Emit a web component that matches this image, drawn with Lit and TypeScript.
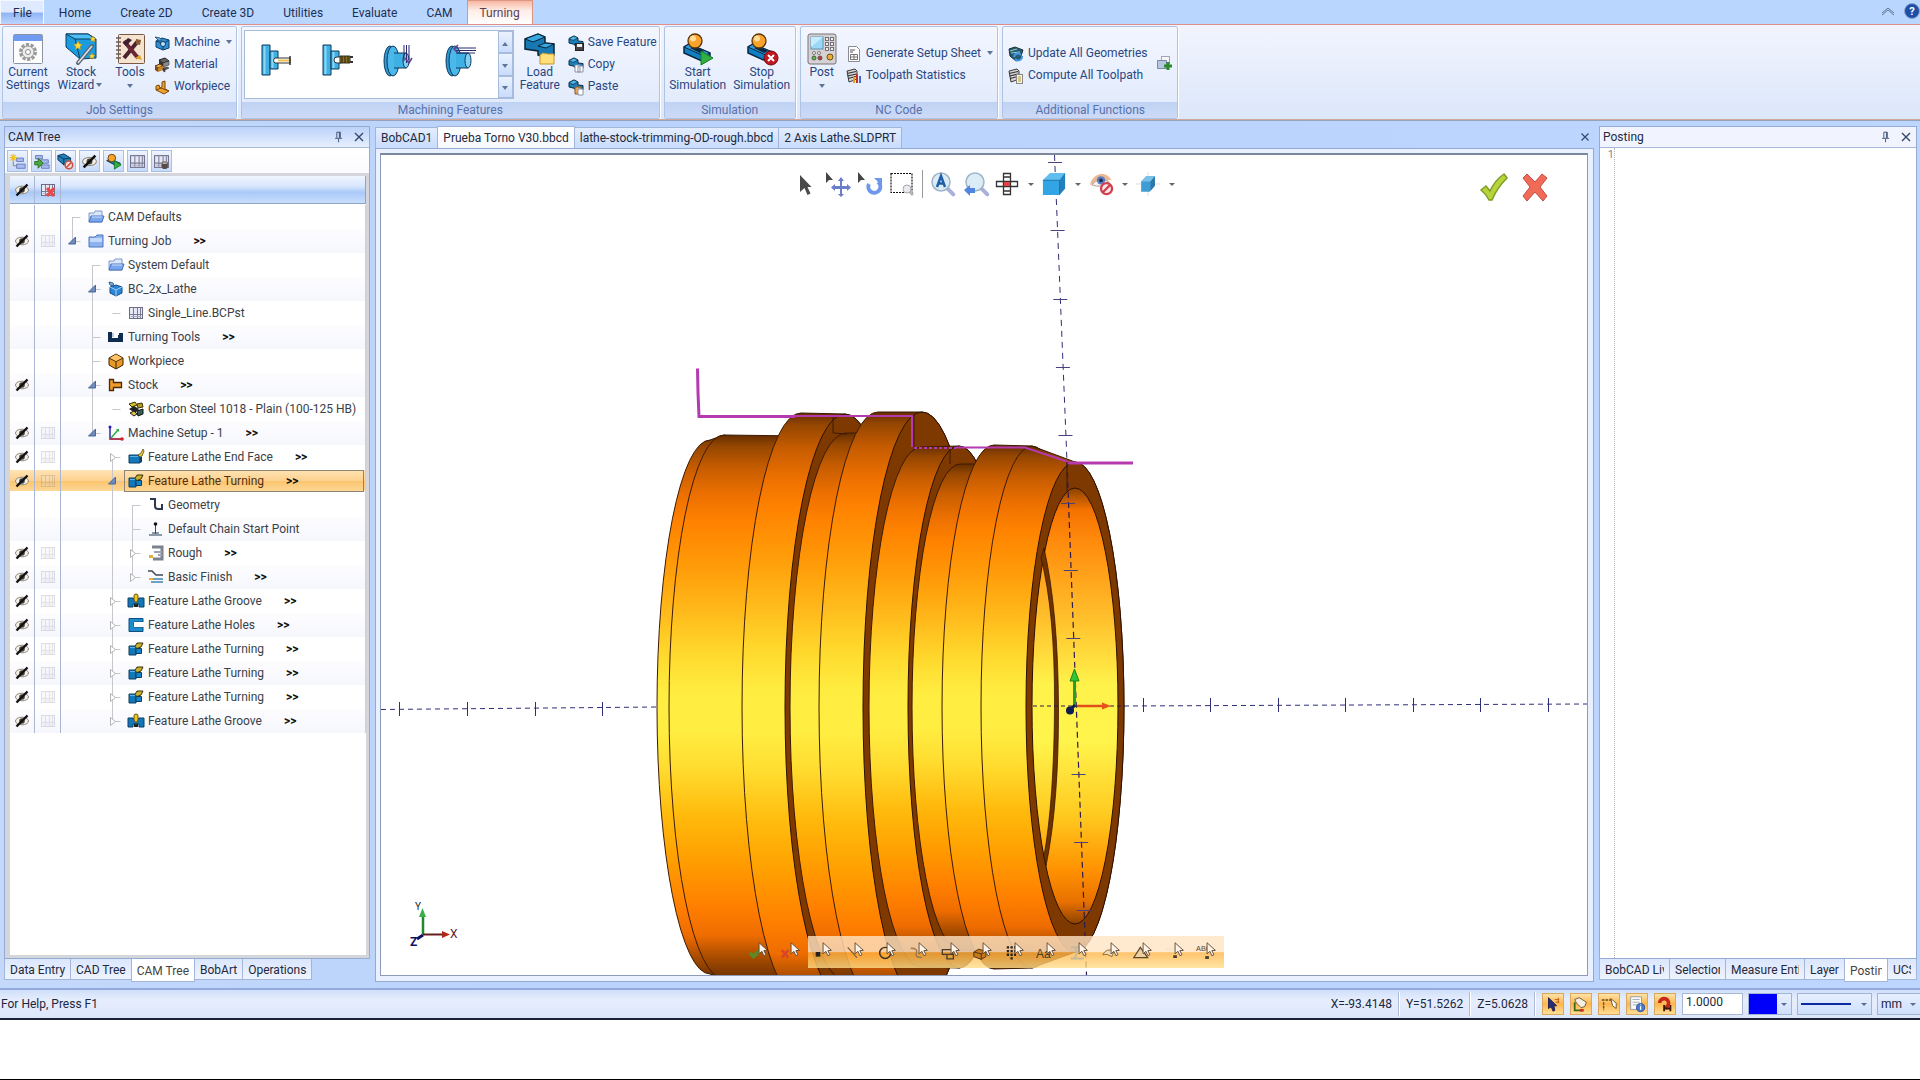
import { LitElement, html, svg, css, nothing, TemplateResult, SVGTemplateResult } from "lit";
import { customElement, property, state } from "lit/decorators.js";
import { classMap } from "lit/directives/class-map.js";

/* ---------- icons ---------- */

const cursorShape = (x: number, y: number, fill: string, stroke: string) => svg`
  <path transform="translate(${x} ${y})" d="M0 0 L0 12 L3 9.300 L5.200 14 L7.400 13 L5.200 8.500 L9 8.200 Z" fill=${fill} stroke=${stroke} stroke-width="1"/>`;

const magnifier = (cx: number, cy: number, r: number) => svg`
  <path d="M${cx + r * 0.7} ${cy + r * 0.7} l6 6" stroke="#a9b0dd" stroke-width="4" stroke-linecap="round"/>
  <circle cx=${cx} cy=${cy} r=${r} fill="#dcecf6" stroke="#9fb4c6" stroke-width="1.500"/>`;

const sheet = svg`
  <rect x="1.500" y="2.500" width="13" height="11" fill="#e6e8f6" stroke="#6c6c84"/>
  <path d="M5.500 3v10M9.500 3v10M12.500 3v10M2 9.500h12" stroke="#7b7b94" fill="none"/>
  <path d="M3 11.500h10" stroke="#a5a8c4"/>`;

const bluePart = svg`
  <path d="M1 3.500 L6 1 L10 3 L10 6 L15 6.500 L15 11 L11 13 L7 11 L7 9.500 L1 8 Z" fill="#1c7fb8" stroke="#0c2c48"/>
  <path d="M1 3.500 L6 1 L10 3 L5 5.500 Z" fill="#54b4e4" stroke="#0c2c48" stroke-width=".7"/>`;

const latheBody = svg`
  <path d="M1 5h7v9H1z" fill="#1478b8" stroke="#0b3f66"/>
  <path d="M8 7.500h5.500v5H8z" fill="#1684c8" stroke="#0b3f66"/>
  <path d="M2 6.500h5" stroke="#5cb4e4"/>`;

const player = svg`
  <path d="M2 14 L7 11 L28 20 L28 25 L22 29 L2 20 Z" fill="#0f7fc4" stroke="#0a2740" stroke-width="1.500"/>
  <path d="M2 14 L7 11 L28 20 L22 23 Z" fill="#2b9ee0" stroke="#0a2740"/>
  <path d="M8 15 L12 13.500 L22 18 L18 20 Z" fill="#0a2740"/>
  <circle cx="13" cy="8" r="7" fill="#f8a32a" stroke="#5c3406" stroke-width="1.300"/>
  <circle cx="11" cy="5.500" r="3" fill="#ffdc9a"/>`;

const chuck = svg`
  <path d="M2 1h8v30H2z" fill="#3fb0e4" stroke="#12395c"/>
  <path d="M10 7h8v18h-8z" fill="#3fb0e4" stroke="#12395c"/>
  <path d="M4.500 2v28M12.500 8v16" stroke="#8ad8f8" stroke-width="2"/>`;

const disc = svg`
  <ellipse cx="7" cy="17" rx="6" ry="15" fill="#2a9bd6" stroke="#12395c"/>
  <ellipse cx="10" cy="17" rx="6" ry="15" fill="#4bb8ea" stroke="#12395c"/>
  <path d="M11 9h12v15H11z" fill="#3fb0e4"/>
  <path d="M11 9h12M11 24h12" stroke="#12395c"/>
  <ellipse cx="23" cy="16.500" rx="3" ry="7.500" fill="#7fd0f4" stroke="#12395c"/>`;

const notes = svg`
  <path d="M1 3l8-2 2 2v8l-8 3z" fill="#d4d4d4" stroke="#3a3a3a"/>
  <path d="M1 5.500l9-2M1.500 8l9-2M2 10.500l8-2" stroke="#333" stroke-width="1.200"/>`;

const pick = cursorShape(12, 3, "#fff4e6", "#5a4a3a");

const ICONS: Record<string, [number, SVGTemplateResult]> = {
  settings: [32, svg`
    <rect x="1.500" y="1.500" width="29" height="29" rx="1" fill="#fdfdfd" stroke="#8b93a4"/>
    <rect x="2" y="2" width="28" height="6" fill="#6f9cf0"/>
    <circle cx="16" cy="19" r="7" fill="none" stroke="#9a9a9a" stroke-width="4" stroke-dasharray="3 1.400"/>
    <circle cx="16" cy="19" r="6" fill="#ececec" stroke="#9a9a9a"/><circle cx="16" cy="19" r="2.500" fill="#fff" stroke="#8a8a8a"/>`],
  wizard: [32, svg`
    <path d="M1 1h22l8 5v19l-16 1L1 14z" fill="#1a9ce0" stroke="#0d3c60"/>
    <path d="M1 1h22l8 5H10z" fill="#4cc0f4" stroke="#0d3c60"/><path d="M10 6L15 26" stroke="#0d3c60"/>
    <path d="M27 13L13 30" stroke="#5c6470" stroke-width="4" stroke-linecap="round"/><path d="M27 13L13 30" stroke="#dfe4ea" stroke-width="1.500"/>
    <path d="M13 8l1.500 3 3 .5-2.500 2 .6 3-2.600-1.600-2.600 1.600.6-3-2.500-2 3-.5zM28 3l1 2 2 .3-1.500 1.500.4 2-1.900-1-2 1 .4-2L25 5.300l2-.3zM27 20l1 2 2 .3-1.500 1.500.4 2-1.900-1-2 1 .4-2-1.400-1.500 2-.3z" fill="#ffd83a" stroke="#b8860b" stroke-width=".5"/>`],
  tools: [32, svg`
    <rect x="4.500" y="1.500" width="26" height="29" rx="1" fill="#f4e3cf" stroke="#7b5a44"/>
    <path d="M2 5h5M2 9h5M2 13h5M2 17h5M2 21h5M2 25h5" stroke="#6a5a58" stroke-width="1.500"/>
    <path d="M10 25L24 8" stroke="#4c2230" stroke-width="4"/><path d="M10 8l14 17" stroke="#6b2638" stroke-width="4"/>
    <path d="M9 10l5-5 4 2-6 6z" fill="#3a2030"/><path d="M21 25l5-3 2 5z" fill="#e0a62a"/><path d="M22 6l5 1-1 5-4-1z" fill="#8a5a30"/>`],
  machine: [16, svg`
    <path d="M2 6l6-3 7 2v8l-6 2-7-3z" fill="#2f8fd4" stroke="#0d3c66"/><path d="M2 6l7 2.500L15 5M9 8.500V15" stroke="#0d3c66" fill="none"/>
    <path d="M1 2l5 1 2 3-4-1z" fill="#7fb6e0" stroke="#2b5c86"/><circle cx="9" cy="9" r="2.500" fill="#bfe0f6" stroke="#0d3c66"/>`],
  material: [16, svg`
    <path d="M5 3l6-2 4 3-6 2z" fill="#666" stroke="#222"/><path d="M5 3v4l4 2V6z" fill="#333"/><path d="M9 6l6-2v4L9 10z" fill="#8a8a8a" stroke="#222" stroke-width=".5"/>
    <path d="M1 9l5-2 3 2-5 2z" fill="#f0b050" stroke="#50300a"/><path d="M1 9v4l3 2v-4z" fill="#7c4a10"/><path d="M4 11l5-2v4l-5 2z" fill="#c8862a"/>
    <path d="M9 11l4-1 2 1-4 2zM9 11v3l2 1v-2z" fill="#555" stroke="#222" stroke-width=".5"/>`],
  workpiece: [16, svg`
    <path d="M2 7l3-1 1 3 2-1V3l3-1v8l4 2-5 3-8-4z" fill="#f0a030" stroke="#7a4a0a"/><path d="M2 11l5-2 8 3" stroke="#7a4a0a" fill="none"/>`],
  feat1: [32, svg`${chuck}<path d="M30 14H15a3 3 0 0 0 0 5h15z" fill="#fff" stroke="#333"/><path d="M18 15.500h11v2H18z" fill="#f0c050"/><path d="M30 12v9" stroke="#333" stroke-width="1.500"/>`],
  feat2: [32, svg`${chuck}<path d="M20 13h-4a3 3 0 0 0 0 6h4z" fill="#fff" stroke="#333"/><path d="M19 12h10v7H19z" fill="#8a7020" stroke="#333"/><path d="M21 12v7M24 12v7M27 12v7" stroke="#2a2208"/><path d="M29 13h3M29 18h3" stroke="#333" stroke-width="2"/>`],
  feat3: [32, svg`${disc}<path d="M21 1v16M23.500 1v18M26 1v15" stroke="#28286c"/><path d="M22 14l4 5 3-5" fill="none" stroke="#6a3a8c" stroke-width="1.500"/>`],
  feat4: [32, svg`${disc}<path d="M10 4h21M10 6.500h21M12 9h18" stroke="#28286c"/><path d="M13 1l-4 4 4 4" fill="none" stroke="#6a3a8c" stroke-width="1.500"/>`],
  load: [32, svg`
    <path d="M1 6l13-5 7 3v6l9 1v11l-8 3-8-3v-4L1 16z" fill="#1779b4" stroke="#0a2338" stroke-width="1.500"/>
    <path d="M1 6l13-5 7 3-12 5z" fill="#3aa8e0" stroke="#0a2338"/><path d="M14 13l7-3 9 1-8 4z" fill="#3aa8e0" stroke="#0a2338"/>
    <path d="M16 22l3-2 5 1h6v10H16z" fill="#ffe07a" stroke="#c8962a"/>`],
  save: [16, svg`${bluePart}<rect x="7.500" y="8.500" width="8" height="7" fill="#444" stroke="#222"/><path d="M9 9h5v3H9z" fill="#eee"/>`],
  copy: [16, svg`${bluePart}<path d="M7 8h5v7H7zM10 9h5v6h-5z" fill="#fff" stroke="#8a92a8"/>`],
  paste: [16, svg`${bluePart}<path d="M7 8h6v7H7z" fill="#e8a860" stroke="#8a5a2a"/><path d="M10 10h5v6h-5z" fill="#fff" stroke="#8a92a8"/>`],
  start: [32, svg`${player}<path d="M19 18l12 7-12 7z" fill="#30b040" stroke="#177a24"/>`],
  stop: [32, svg`${player}<circle cx="25" cy="25" r="7" fill="#c01820" stroke="#7a0a10"/><path d="M22 22l6 6M28 22l-6 6" stroke="#fff" stroke-width="2"/>`],
  post: [32, svg`
    <rect x="2" y="1" width="28" height="30" rx="2" fill="#d6d2d4" stroke="#77727a"/><rect x="5" y="4" width="12" height="12" fill="#9bd8f8" stroke="#5a90b0"/>
    <path d="M5 4h12L5 14z" fill="#c6ecff"/>
    <g fill="#eee" stroke="#77727a"><rect x="19.500" y="4.500" width="3" height="3"/><rect x="24.500" y="4.500" width="3" height="3"/><rect x="19.500" y="9.500" width="3" height="3"/><rect x="24.500" y="9.500" width="3" height="3"/><rect x="19.500" y="14.500" width="3" height="3"/><rect x="24.500" y="14.500" width="3" height="3"/></g>
    <circle cx="8" cy="20" r="1.500" fill="#fff" stroke="#777"/><circle cx="13" cy="20" r="1.500" fill="#fff" stroke="#777"/>
    <circle cx="8" cy="25" r="2" fill="#5ac040" stroke="#555"/><circle cx="14" cy="25" r="2" fill="#d03030" stroke="#555"/><circle cx="24" cy="24" r="3" fill="#e8b030" stroke="#6a5020"/>`],
  setupSheet: [16, svg`<path d="M2.500.5h8l3 3v12h-11z" fill="#fff" stroke="#8a8a92"/><path d="M4 4h5M4 6h3" stroke="#555"/><path d="M4.500 8.500h7v5h-7zM8 8.500v5M4.500 11h7" stroke="#777" fill="none"/>`],
  stats: [16, svg`${notes}<path d="M7 9h2v6H7z" fill="#e0a020"/><path d="M10 6h2v9h-2z" fill="#c83030"/><path d="M13 8h2v7h-2z" fill="#4868d0"/>`],
  update: [16, svg`<path d="M1 3l6-2 8 3-3 9-4 2-6-5z" fill="#2a5a70" stroke="#18303c"/><path d="M2 5l7-2M3 7l9-1" stroke="#9cc"/><path d="M6 11a4 4 0 0 1 7-2M14 10a4 4 0 0 1-7 3" stroke="#3a9ae8" stroke-width="2" fill="none"/>`],
  compute: [16, svg`${notes}<rect x="8.500" y="6.500" width="6" height="9" fill="#f4f4e8" stroke="#888"/><path d="M10 9h3M10 11h3M10 13h3" stroke="#b89a30"/>`],
  addWin: [16, svg`<rect x="4.500" y="1.500" width="8" height="7" fill="#f6f6fa" stroke="#a0a4b4"/><path d="M.5 5.500h9v8H.5z" fill="#b8c6e0" stroke="#7a8aaa"/><path d="M11 7v8M7 11h8" stroke="#2c8a2c" stroke-width="3"/>`],
  eye: [16, svg`<ellipse cx="8" cy="8" rx="6.500" ry="3.800" fill="#f6f1e6" stroke="#8f8778"/><circle cx="8" cy="8" r="2.800" fill="#444"/><path d="M2.500 13.500L13.500 2.500" stroke="#111" stroke-width="2.400"/>`],
  sheet: [16, sheet],
  sheetX: [16, svg`${sheet}<path d="M7 6l7 8M14 6l-7 8" stroke="#e84848" stroke-width="3"/>`],
  sheetDb: [16, svg`${sheet}<rect x="8" y="8" width="6" height="7" rx="2" fill="#5a4a48"/><path d="M9 9.500h4" stroke="#eee"/>`],
  folder: [16, svg`<path d="M1 4h5l1-2h7v11H1z" fill="#dbe8fb" stroke="#7d98c8"/><path d="M1 13L3 7h13l-2 6z" fill="#7aa6ee" stroke="#4d76bc"/><path d="M4 8h10" stroke="#cfe2ff"/>`],
  folderShut: [16, svg`<path d="M1 4h6l2-2h6v12H1z" fill="#8db2f0" stroke="#4d76bc"/><path d="M2 5h12v4H2z" fill="#c3d9fb"/>`],
  bccube: [16, svg`<path d="M2 6l6-2 6 2v6l-6 3-6-3z" fill="#2c86d8" stroke="#134c86"/><path d="M2 6l6 3 6-3M8 9v6" stroke="#9fd0f8" fill="none"/><path d="M1 1l4 1 1 3-4-1z" fill="#8ab8e8" stroke="#2c5c94"/>`],
  turningTools: [16, svg`<path d="M0 3h4v6h6V6h1V4h4v9H0z" fill="#0e2c50"/><path d="M5 4v4" stroke="#7aa0c8"/>`],
  box: [16, svg`<path d="M1 5l7-4 7 4v7l-7 4-7-4z" fill="#e89a28" stroke="#3e2404"/><path d="M1 5l7 3.500L15 5M8 8.500V16" stroke="#3e2404" fill="none"/><path d="M2 5l6-3.500L14 5 8 8z" fill="#ffc468"/>`],
  stock: [16, svg`<path d="M1.500 2.500h4v3h8v5h-8v3h-4z" fill="#ee9a2c" stroke="#4a2a04" stroke-width="1.300"/>`],
  steel: [16, svg`<path d="M1 3l6-2 2 3-5 2z" fill="#d8c020" stroke="#3a3404"/><path d="M9 3l5-1 1 4-5 1z" fill="#b89a18" stroke="#3a3404"/><path d="M1 8l5-3 5 3-4 4z" fill="#222"/><path d="M2 12l4-2 3 3-3 2z" fill="#e0c040" stroke="#222"/><path d="M9 10l6-2v5l-5 2z" fill="#35605a" stroke="#111"/>`],
  axes: [16, svg`<path d="M2 1v13h12" stroke="#2a2aa8" stroke-width="1.500" fill="none"/><path d="M2 14h13" stroke="#c83030" stroke-width="1.500"/><path d="M3 13l7-8" stroke="#2fae3c" stroke-width="1.500"/><path d="M8 4h3v3z" fill="#2fae3c"/><circle cx="14" cy="14" r="1.800" fill="#d02020"/><circle cx="2" cy="2" r="1.500" fill="#2020b0"/>`],
  endFace: [16, svg`<path d="M1 6h11v8H1z" fill="#1478b8" stroke="#0b3f66"/><path d="M12 7l2 1v5l-2 1z" fill="#0f3f64"/><path d="M10 6l3-2 2-4 1 2-2 5-2 1z" fill="#e8c838" stroke="#4a3a08" stroke-width=".7"/><path d="M2 7.500h8" stroke="#5cb4e4"/>`],
  turning: [16, svg`${latheBody}<path d="M7 5.500l2-3.500h6l-2 4-4 1.500z" fill="#c8b030" stroke="#3a3008"/>`],
  groove: [16, svg`<path d="M0 5h5l2 3h2l2-3h5v9h-5v-3H5v3H0z" fill="#1478b8" stroke="#0b3f66"/><path d="M6 3a2 2 0 0 1 4 0v4l-2 3-2-3z" fill="#f0c820" stroke="#6a5008"/><path d="M6 14v-3h4v3" fill="#222"/>`],
  holes: [16, svg`<path d="M1 1.500h14V5H6v5h9v4.500H1z" fill="#1f8ccc" stroke="#0d4f80"/><path d="M6 5h9v5H6z" fill="#fff"/>`],
  geometry: [16, svg`<path d="M2 2h5v7q0 3 3 3h4V7" stroke="#2c3850" stroke-width="2" fill="none"/>`],
  chain: [16, svg`<path d="M1 14h13M4 12h7" stroke="#6a7a8c" stroke-width="1.500"/><path d="M7.500 13V4" stroke="#3a4a5c"/><circle cx="7.500" cy="3" r="1.800" fill="#111"/>`],
  rough: [16, svg`<path d="M4 2h10v12H5" stroke="#7a8490" stroke-width="3" fill="none"/><path d="M6 7h8M10 10h4" stroke="#9aa4b0" stroke-width="2"/><path d="M1 10h4v3H1z" fill="#e0b040"/>`],
  finish: [16, svg`<path d="M0 2h4l4 4h7" stroke="#3f4a58" stroke-width="1.500" fill="none"/><path d="M3 10h12M3 13h12" stroke="#6ea0c4" stroke-width="2"/><path d="M1 9h4v2H1z" fill="#e0b040"/>`],
  tb1: [20, svg`<path d="M9 6h8v4H9zM9 13h10v5H9z" fill="#a9bcf0" stroke="#6074b8"/><path d="M5 7v8h4" stroke="#777" fill="none"/><path d="M5 1v9M1 5.500h9M2 2l6 7M8 2l-6 7" stroke="#f2c21c" stroke-width="1.300"/>`],
  tb2: [20, svg`<path d="M3 3h8v4H3zM9 8h9v4H9zM10 14h9v4h-9z" fill="#a9bcf0" stroke="#6074b8"/><path d="M2 10h4V6l6 6-6 6v-4H2z" fill="#48a83c" stroke="#2a6a20"/>`],
  tb3: [20, svg`<path d="M1 3l7-2 8 5v5l-8 3-7-6z" fill="#1f80bc" stroke="#0c2c48"/><path d="M1 3l7 4 8-1M8 7v7" stroke="#0c2c48" fill="none"/><circle cx="14" cy="14" r="4.500" fill="#f4dcd8" stroke="#c85040" stroke-width="1.800"/><path d="M11 17l6-6" stroke="#c85040" stroke-width="1.800"/>`],
  tb5: [20, svg`<path d="M2 9l4-2 12 5-3 4z" fill="#0f7fc4" stroke="#0a2740"/><circle cx="8" cy="6" r="4.500" fill="#f8a32a" stroke="#5c3406"/><path d="M11 9l8 5-8 5z" fill="#30b040" stroke="#177a24"/>`],
  pin: [16, svg`<path d="M5.500 9V2.500h4V9M8.500 2.500V9M3.500 9.500h8M7.500 10v4" stroke="#33486c" fill="none"/>`],
  close: [16, svg`<path d="M4 4l8 8M12 4l-8 8" stroke="#33486c" stroke-width="1.400"/>`],
  chevron: [16, svg`<path d="M2 10l6-5 6 5M2 12l6-5 6 5" stroke="#5d7391" fill="none"/>`],
  help: [16, svg`<circle cx="8" cy="8" r="7.500" fill="#1d4fa8" stroke="#8fa4c8"/><text x="8" y="12" text-anchor="middle" font-family="Roboto, sans-serif" font-weight="700" font-size="11" fill="#fff">?</text>`],
  /* view toolbar */
  vArrow: [24, svg`<path d="M6 3v17l4.500-4 3 7 3-1.500-3-6.500h4z" fill="#4a4a4a"/>`],
  vPan: [24, svg`<path d="M0 0v11l3-3h4z" fill="#444"/><path d="M15 5l3 4h-2v5h5v-2l4 3.500-4 3.500v-2h-5v5h2l-3 3-3-3h2v-5H9v2l-4-3.500L9 12v2h5V9h-2z" fill="#6b7cc8"/>`],
  vRotate: [24, svg`<path d="M0 0v11l3-3h4z" fill="#444"/><path d="M11 12a6 6 0 1 0 9-2" stroke="#6f98ec" stroke-width="4" fill="none"/><path d="M16 6h8v8z" fill="#6f98ec"/>`],
  vWindow: [24, svg`<path d="M1 1.500h21v19H1z" stroke="#111" stroke-width="1.200" stroke-dasharray="2 1" fill="none"/><path d="M19 19l4 4" stroke="#b4b4bc" stroke-width="3"/><circle cx="17" cy="17" r="4" fill="#e8eaec" stroke="#a8a8b0"/>`],
  vZoomAll: [24, svg`${magnifier(10, 10, 9)}<path d="M6 15l4-11 4 11M7.500 11.500h5" stroke="#1e5fa8" stroke-width="2.500" fill="none"/>`],
  vZoomPrev: [24, svg`${magnifier(12, 10, 9)}<path d="M1 18l6-5v3h5v5H7v3z" fill="#4f86e0"/>`],
  vOrient: [24, svg`<path d="M8.500 1.500h7v21h-7zM1.500 9.500h21v5h-21zM8.500 5h7M8.500 19h7" fill="#fff" stroke="#333" stroke-width="1.300"/><path d="M9 10h6v4H9z" fill="#e84040"/>`],
  vCube: [26, svg`<path d="M1 9l8-8h16v17l-7 7H1z" fill="#33a4e4"/><path d="M1 9l8-8h16l-6 8z" fill="#5fbdf0"/><path d="M19 9l6-8v17l-6 7z" fill="#2380bc"/><path d="M1 9h18v16" fill="none" stroke="#2272a6"/>`],
  vHide: [26, svg`<path d="M1 14Q3 4 13 2q8 0 12 8-3-3-5 0Q14 6 8 11q-3 2-7 3z" fill="#edb791"/><path d="M3 14Q11 4 22 11 14 18 3 14z" fill="#eef2f6" stroke="#b89a84"/><circle cx="13" cy="9" r="4.500" fill="#5a7cc0"/><circle cx="13" cy="9" r="2" fill="#1c2c50"/><circle cx="19" cy="18" r="6" fill="#fbe9e9" stroke="#d04050" stroke-width="2.500"/><path d="M15 22l8-8" stroke="#d04050" stroke-width="2.500"/>`],
  vSmallCube: [28, svg`<path d="M0 14h28M14 0v28" stroke="#d4d8dc"/><path d="M6 11l6-6h10v11l-6 7H6z" fill="#3f9cd4"/><path d="M6 11l6-6h10l-5 6z" fill="#7ac0e8"/><path d="M17 11l5-6v11l-5 6z" fill="#2c78a8"/>`],
  ok: [28, svg`<path d="M1 17l5-4 4 5Q15 7 24 1l3 4Q17 15 12 27H9Q6 21 1 17z" fill="#b8d43c" stroke="#7f9c26" stroke-width="1.500"/>`],
  cancel: [28, svg`<path d="M2 5l4-4 8 8 7-8 5 4-7 9 7 9-4 5-8-9-8 9-4-5 7-9z" fill="#f06a58" stroke="#c84a40"/>`],
  /* selection filter */
  sOk: [26, svg`<path d="M2 14l4 4L16 8" stroke="#5c8a28" stroke-width="4" fill="none"/>${pick}`],
  sNo: [26, svg`<path d="M2 11l7 8M9 11l-7 8" stroke="#d84828" stroke-width="3"/>${pick}`],
  sPoint: [26, svg`<path d="M4 13h5v5H4z" fill="#2a2218"/>${pick}`],
  sLine: [26, svg`<path d="M4 8l10 11" stroke="#7a5a3a" stroke-width="1.300"/>${pick}`],
  sCircle: [26, svg`<circle cx="10" cy="14" r="6" fill="none" stroke="#3a3020" stroke-width="1.600"/>${pick}`],
  sArc: [26, svg`<path d="M3 9q8 0 6 5t6 5" fill="none" stroke="#a07848" stroke-width="1.500"/>${pick}`],
  sRect: [26, svg`<path d="M2.500 10.500h11v5h-11zM7.500 15.500h7v5h-7z" fill="none" stroke="#4a3c28" stroke-width="1.400"/>${pick}`],
  sSolid: [26, svg`<path d="M2 13l5-3 8 2v6l-5 3-8-3z" fill="#c8781c" stroke="#4a3010"/><path d="M2 13l8 2 5-3M10 15v6" stroke="#4a3010" fill="none"/>${pick}`],
  sGrid: [26, svg`<path d="M3 8h10M3 12h10M3 16h10M7 20h3" stroke="#2a2218" stroke-width="2.500" stroke-dasharray="2.500 1.500"/>${pick}`],
  sText: [26, svg`<text x="0" y="20" font-family="Liberation Sans, sans-serif" font-size="13" fill="#4a3c28">Aa</text>${pick}`],
  sDim: [26, svg`<path d="M3 8h14M3 20h14M7 8l3 6-3 6" stroke="#c8b898" stroke-width="2" fill="none"/>${pick}`],
  sSurf: [26, svg`<path d="M3 16q4-8 12-4l-2 6q-6-4-10-2z" fill="#f0d8b0" stroke="#8a6a3a"/>${pick}`],
  sPlane: [26, svg`<path d="M2 19L9 8l8 11z" fill="#f0d0a0" stroke="#5a4628" stroke-width="1.300"/>${pick}`],
  sMid: [26, svg`<path d="M2 10h9" stroke="#f8e6c8" stroke-width="3"/><path d="M10 18h4" stroke="#4a3c28" stroke-width="3"/>${pick}`],
  sLabel: [26, svg`<text x="0" y="12" font-family="Liberation Sans, sans-serif" font-size="8" fill="#5a4628">ABC</text><path d="M10 19h4" stroke="#4a3c28" stroke-width="3"/>${pick}`],
  /* status bar toggles */
  stSnap: [20, svg`<path d="M5 3v12l3-2 2 5 2-1-1-5h3z" fill="#24307c" stroke="#20184c"/><path d="M12 5h5M13 8h4M16 3v6" stroke="#c86820" stroke-width="1.300"/>`],
  stTool: [20, svg`<path d="M3 5l5-2 8 5-2 5-4 1-5-5z" fill="#f4f0e4" stroke="#6a5430"/><path d="M3 8v9h8" stroke="#3c6a1c" stroke-width="2" fill="none"/><path d="M9 17h4" stroke="#c83018" stroke-width="3"/>`],
  stBox: [20, svg`<path d="M2 5.500h12M4 8v9" stroke="#6a4c20" stroke-width="1.500" stroke-dasharray="3 1"/><path d="M12 4l6 5v6l-4-3z" fill="#fff" stroke="#6a4c20"/>`],
  stInfo: [20, svg`<path d="M3 2h12v14H3z" fill="#fdfdf6" stroke="#8898b0"/><path d="M5 5h8M5 8h8M5 11h5" stroke="#98a8c0"/><circle cx="14" cy="14" r="4.500" fill="#4a78c8" stroke="#2c5098"/><path d="M14 12.500v4M14 10.500v1" stroke="#fff" stroke-width="1.500"/>`],
  stMagnet: [20, svg`<path d="M4 9a5 5 0 1 1 9 3l-3 3" stroke="#c82818" stroke-width="4" fill="none"/><path d="M9 11v7M16 11v7M9 15h7" stroke="#3c1808" stroke-width="2"/>`],
};

@customElement("bc-icon")
export class BcIcon extends LitElement {
  static styles = css`
    :host { display: inline-flex; flex: none; }
    .glyph { display: block; overflow: visible; }
  `;
  @property() name = "";
  @property({ type: Number }) size = 16;
  render() {
    const entry = ICONS[this.name];
    if (!entry) return nothing;
    return html`<svg class="glyph" aria-hidden="true" width=${this.size} height=${this.size} viewBox="0 0 ${entry[0]} ${entry[0]}" fill="none">${entry[1]}</svg>`;
  }
}

const icon = (name: string, size = 16) => html`<bc-icon name=${name} size=${size}></bc-icon>`;

/* ---------- ribbon ---------- */

const RIBBON_TABS = ["File", "Home", "Create 2D", "Create 3D", "Utilities", "Evaluate", "CAM", "Turning"];

@customElement("bc-ribbon")
export class BcRibbon extends LitElement {
  static styles = css`
    :host { display: block; flex: none; font: 12px/13px Roboto, "Liberation Sans", sans-serif; color: #284782; }
    button { font: inherit; color: inherit; background: none; border: 0; padding: 0; margin: 0; }
    .tabs { display: flex; height: 24px; background: #b9d6ff; align-items: stretch; }
    .tab { padding: 2px 13px 0 14px; border: 1px solid transparent; border-bottom: 0; color: #1c2f52; }
    .tab.file { padding: 2px 11px 0 12px; background: linear-gradient(#dfeaff 0 48%, #8fb4f4 52%, #bcd5ff); border-color: #f3f8ff; }
    .tab.current { background: linear-gradient(#f6b7a0, #fdece6 40%, #fff); border-color: #dc9585; color: #5a3f52; padding: 2px 12px 0; }
    .spacer { flex: 1; }
    .corner { display: flex; align-items: center; gap: 8px; }
    .body { display: flex; gap: 4px; padding: 1px 2px 0; border-top: 1px solid #dd8f88; border-bottom: 1px solid #d2a79c; background: linear-gradient(#f1f4fe, #dce7fa); }
    .group { display: flex; flex-direction: column; border: 1px solid #aec4e6; border-radius: 2px; background: linear-gradient(#f3f6ff, #dfe9fb); box-shadow: 1px 0 #fff; }
    .content { display: flex; align-items: stretch; height: 75px; padding: 0 1px; }
    .caption { height: 16px; line-height: 17px; text-align: center; color: #5872ab; background: linear-gradient(#bfd2f3, #cddaf8); }
    .large { display: flex; flex-direction: column; align-items: center; width: 48px; padding-top: 6px; gap: 1px; }
    .large.w40 { width: 40px; }
    .large.w58 { width: 58px; }
    .large.w64 { width: 64px; }
    .large .caption-text { white-space: pre-line; text-align: center; }
    .caret { display: inline-block; width: 0; height: 0; border: 3px solid transparent; border-top: 4px solid #60759a; border-bottom: 0; margin: 0 2px 2px; }
    .large > .caret { margin-top: 4px; }
    .list { display: flex; flex-direction: column; justify-content: center; padding: 0 1px 0 4px; }
    .small { display: flex; align-items: center; gap: 4px; height: 22px; white-space: nowrap; }
    .gallery { display: flex; margin: 3px 2px 3px 1px; width: 268px; border: 1px solid #a7bbdc; background: #fff; }
    .thumbs { flex: 1; display: flex; align-items: center; justify-content: space-around; padding: 0 6px 6px 0; }
    .scroll { display: flex; flex-direction: column; width: 15px; }
    .scroll button { flex: 1; border: 1px solid #a7bbdc; background: linear-gradient(#eaf2ff, #c9dcfb); }
    .scroll .caret { margin: 0 auto; }
    .scroll .up .caret { transform: rotate(180deg); }
    .lone { align-self: center; padding: 0 3px 0 9px; }
  `;

  private large(name: string, label: string, width = "", caret = false) {
    return html`<button class="large ${width}">${icon(name, 32)}<span class="caption-text">${label}${caret && label.includes("\n") ? html`<i class="caret"></i>` : nothing}</span>${caret && !label.includes("\n") ? html`<i class="caret"></i>` : nothing}</button>`;
  }
  private small(name: string, label: string, caret = false) {
    return html`<button class="small">${icon(name)}<span>${label}</span>${caret ? html`<i class="caret"></i>` : nothing}</button>`;
  }
  private group(caption: string, content: TemplateResult) {
    return html`<section class="group" aria-label=${caption}><div class="content">${content}</div><div class="caption">${caption}</div></section>`;
  }

  render() {
    return html`
      <nav class="tabs">
        ${RIBBON_TABS.map((t) => html`<button class=${classMap({ tab: true, file: t === "File", current: t === "Turning" })}>${t}</button>`)}
        <span class="spacer"></span>
        <span class="corner">
          <button aria-label="Minimize ribbon">${icon("chevron")}</button>
          <button aria-label="Help">${icon("help")}</button>
        </span>
      </nav>
      <div class="body">
        ${this.group("Job Settings", html`
          ${this.large("settings", "Current\nSettings")}
          ${this.large("wizard", "Stock\nWizard", "w58", true)}
          ${this.large("tools", "Tools", "w40", true)}
          <div class="list">${this.small("machine", "Machine", true)}${this.small("material", "Material")}${this.small("workpiece", "Workpiece")}</div>`)}
        ${this.group("Machining Features", html`
          <div class="gallery">
            <div class="thumbs">
              ${["feat1", "feat2", "feat3", "feat4"].map((n, i) => html`<button aria-label="Feature ${i + 1}">${icon(n, 32)}</button>`)}
            </div>
            <div class="scroll">
              <button aria-label="Scroll up" class="up"><i class="caret"></i></button>
              <button aria-label="Scroll down"><i class="caret"></i></button>
              <button aria-label="More"><i class="caret"></i></button>
            </div>
          </div>
          ${this.large("load", "Load\nFeature")}
          <div class="list">${this.small("save", "Save Feature")}${this.small("copy", "Copy")}${this.small("paste", "Paste")}</div>`)}
        ${this.group("Simulation", html`${this.large("start", "Start\nSimulation", "w64")}${this.large("stop", "Stop\nSimulation", "w64")}`)}
        ${this.group("NC Code", html`
          ${this.large("post", "Post", "w40", true)}
          <div class="list">${this.small("setupSheet", "Generate Setup Sheet", true)}${this.small("stats", "Toolpath Statistics")}</div>`)}
        ${this.group("Additional Functions", html`
          <div class="list">${this.small("update", "Update All Geometries")}${this.small("compute", "Compute All Toolpath")}</div>
          <button class="lone" aria-label="Add window">${icon("addWin")}</button>`)}
      </div>`;
  }
}

/* ---------- CAM tree ---------- */

interface TreeRow {
  level: number;
  icon: string;
  text: string;
  more?: boolean;
  open?: boolean;
  eye?: boolean;
  post?: boolean;
}

const feature = (text: string, name: string, extra: Partial<TreeRow> = {}): TreeRow =>
  ({ level: 2, icon: name, text, more: true, open: false, eye: true, post: true, ...extra });

const ROWS: TreeRow[] = [
  { level: 0, icon: "folder", text: "CAM Defaults" },
  { level: 0, icon: "folderShut", text: "Turning Job", more: true, open: true, eye: true, post: true },
  { level: 1, icon: "folder", text: "System Default" },
  { level: 1, icon: "bccube", text: "BC_2x_Lathe", open: true },
  { level: 2, icon: "sheet", text: "Single_Line.BCPst" },
  { level: 1, icon: "turningTools", text: "Turning Tools", more: true },
  { level: 1, icon: "box", text: "Workpiece" },
  { level: 1, icon: "stock", text: "Stock", more: true, open: true, eye: true },
  { level: 2, icon: "steel", text: "Carbon Steel 1018 - Plain (100-125 HB)" },
  { level: 1, icon: "axes", text: "Machine Setup - 1", more: true, open: true, eye: true, post: true },
  feature("Feature Lathe End Face", "endFace"),
  feature("Feature Lathe Turning", "turning", { open: true }),
  { level: 3, icon: "geometry", text: "Geometry" },
  { level: 3, icon: "chain", text: "Default Chain Start Point" },
  { level: 3, icon: "rough", text: "Rough", more: true, open: false, eye: true, post: true },
  { level: 3, icon: "finish", text: "Basic Finish", more: true, open: false, eye: true, post: true },
  feature("Feature Lathe Groove", "groove"),
  feature("Feature Lathe Holes", "holes"),
  feature("Feature Lathe Turning", "turning"),
  feature("Feature Lathe Turning", "turning"),
  feature("Feature Lathe Turning", "turning"),
  feature("Feature Lathe Groove", "groove"),
];

/** True when a sibling at `level` exists on the given side of row `index`. */
function hasSibling(index: number, level: number, step: 1 | -1): boolean {
  for (let i = index + step; i >= 0 && i < ROWS.length; i += step) {
    if (ROWS[i].level < level) return false;
    if (ROWS[i].level === level) return true;
  }
  return false;
}

@customElement("bc-cam-tree")
export class BcCamTree extends LitElement {
  static styles = css`
    :host { display: flex; flex: 1; min-height: 0; flex-direction: column; border: 3px solid #d5d6dc; border-left-width: 5px; background: #fff; font: 12px/24px Roboto, "Liberation Sans", sans-serif; color: #3a3f48; }
    .head, .row { display: grid; grid-template-columns: 25px 26px minmax(0, 1fr); }
    .head { height: 27px; border-bottom: 1px solid #8ea4c4; background: linear-gradient(#f0f5ff, #d6e5fd 40%, #a9c9f8 60%, #c9defb); }
    .cell { display: flex; align-items: center; justify-content: center; border-right: 1px solid #a9b6d4; }
    .head .wide { border-right: 1px solid #8ea4c4; }
    .list { padding-top: 1px; }
    .row { height: 24px; }
    .row.alt { background: linear-gradient(#fdfdff, #f6f7fd); }
    .main { display: flex; align-items: center; border-right: 1px solid #c5cfe4; padding-left: 3px; }
    .main .guides { flex: none; display: block; }
    .item { display: flex; align-items: center; gap: 4px; padding-left: 4px; height: 20px; white-space: nowrap; }
    .more { font-weight: 700; margin-left: 18px; color: #111; }
    .faint { display: flex; opacity: .22; }
    .row.selected { background: linear-gradient(#fff 1px, #ffe3b4 1px, #fdd190 48%, #fcc671 52%, #fdd795 22px, #fff 22px); color: #54300c; }
    .row.selected .item { flex: 1; border: 1px solid #8d8574; margin-right: 1px; padding-left: 3px; }
  `;
  @state() private selected = 11;

  private guides(row: TreeRow, index: number) {
    const lines: SVGTemplateResult[] = [];
    for (let l = 1; l < row.level; l++) {
      if (hasSibling(index, l, 1)) lines.push(svg`<path d="M${l * 20 + 8.5} 0v24"/>`);
    }
    const x = row.level * 20 + 8.5;
    if (hasSibling(index, row.level, -1)) lines.push(svg`<path d="M${x} 0v12"/>`);
    if (hasSibling(index, row.level, 1)) lines.push(svg`<path d="M${x} 12v12"/>`);
    lines.push(svg`<path d="M${x} 12.500h8"/>`);
    const knob = row.open === undefined ? nothing
      : row.open ? svg`<path d="M${x + 3} 8v7h-7z" fill="#6d8bbd" stroke="#4c6796"/>`
      : svg`<path d="M${x - 2} 8.500l5 4-5 4z" fill="#fff" stroke="#b4b4b4"/>`;
    const w = row.level * 20 + 20;
    return html`<svg class="guides" aria-hidden="true" width=${w} height="24" viewBox="0 0 ${w} 24"><g stroke="#c6c6cc" fill="none">${lines}</g>${knob}</svg>`;
  }

  render() {
    return html`
      <div class="head">
        <span class="cell">${icon("eye")}</span><span class="cell">${icon("sheetX")}</span><span class="wide"></span>
      </div>
      <div class="list" role="tree" aria-label="CAM Tree">
        ${ROWS.map((r, i) => html`
          <div class=${classMap({ row: true, alt: i % 2 === 1, selected: i === this.selected })} role="treeitem" aria-level=${r.level + 1} @click=${() => (this.selected = i)}>
            <span class="cell">${r.eye ? icon("eye") : nothing}</span>
            <span class="cell">${r.post ? html`<span class="faint">${icon("sheet")}</span>` : nothing}</span>
            <span class="main">${this.guides(r, i)}<span class="item">${icon(r.icon)}<span>${r.text}</span>${r.more ? html`<span class="more">&gt;&gt;</span>` : nothing}</span></span>
          </div>`)}
      </div>`;
  }
}

/* ---------- model viewport ---------- */

interface Ring { cx: number; rx: number; ry: number; }

const AXIS_Y = 707;
const VERTICAL_TICKS = [162, 230, 299, 367, 435, 503, 570, 638, 774, 842, 910];
const LEFT_TICKS = [399, 467, 535, 602];
const RIGHT_TICKS = [1143, 1210, 1278, 1345, 1413, 1480, 1548];

/* Sections of the turned part, from the far end to the near face. */
const SECTIONS: { from: Ring; to: Ring; face: boolean }[] = [
  { from: { cx: 710, rx: 53, ry: 267 }, to: { cx: 724, rx: 55, ry: 272 }, face: false },
  { from: { cx: 724, rx: 55, ry: 272 }, to: { cx: 801, rx: 55, ry: 271 }, face: false },
  { from: { cx: 801, rx: 59, ry: 294 }, to: { cx: 845, rx: 60, ry: 293 }, face: true },
  { from: { cx: 846, rx: 56, ry: 274 }, to: { cx: 880, rx: 56, ry: 274 }, face: false },
  { from: { cx: 878, rx: 59, ry: 295 }, to: { cx: 922, rx: 59, ry: 295 }, face: true },
  { from: { cx: 921, rx: 52, ry: 260 }, to: { cx: 959, rx: 51, ry: 261 }, face: true },
  { from: { cx: 960, rx: 48, ry: 243 }, to: { cx: 996, rx: 48, ry: 243 }, face: false },
  { from: { cx: 994, rx: 52, ry: 262 }, to: { cx: 1032, rx: 51, ry: 261 }, face: false },
  { from: { cx: 1032, rx: 51, ry: 261 }, to: { cx: 1075, rx: 49, ry: 245 }, face: true },
];

const STEEL_STOPS: [number, string][] = [
  [0, "#642e00"], [0.02, "#944600"], [0.06, "#c65c00"], [0.11, "#ec7000"], [0.16, "#ff8200"],
  [0.24, "#ff9b08"], [0.32, "#ffb81a"], [0.4, "#ffd82c"], [0.47, "#ffec40"], [0.54, "#ffee42"], [0.61, "#ffdd30"],
  [0.7, "#ffba0c"], [0.78, "#ff9f00"], [0.87, "#ff7e00"], [0.92, "#ee6c00"], [0.96, "#a84c00"], [1, "#6b3000"],
];

const VIEW_TOOLS: [string, number, boolean][] = [
  ["vArrow", 24, false], ["vPan", 24, false], ["vRotate", 24, false], ["vWindow", 24, false], ["|", 0, false],
  ["vZoomAll", 24, false], ["vZoomPrev", 24, false], ["vOrient", 24, true], ["vCube", 24, true], ["vHide", 24, true], ["vSmallCube", 24, true],
];

const PICK_TOOLS = ["sPoint", "sLine", "sCircle", "sArc", "sRect", "sSolid", "sGrid", "sText", "sDim", "sSurf", "sPlane", "sMid", "sLabel"];

@customElement("bc-viewport")
export class BcViewport extends LitElement {
  static styles = css`
    :host { display: block; flex: 1; min-height: 0; position: relative; overflow: hidden; background: #fff; }
    button { border: 0; padding: 0; margin: 0; background: none; display: flex; align-items: center; justify-content: center; }
    .scene { position: absolute; inset: 0; width: 100%; height: 100%; }
    .view-tools { position: absolute; top: 16px; left: 0; right: 0; display: flex; justify-content: center; align-items: center; gap: 8px; height: 26px; }
    .view-tools .drop { display: flex; align-items: center; gap: 9px; }
    .caret { width: 0; height: 0; border: 3px solid transparent; border-top: 3px solid #666; border-bottom: 0; }
    .rule { width: 1px; height: 28px; background: #9a9a9a; }
    .confirm { position: absolute; top: 18px; right: 38px; display: flex; gap: 13px; }
    .pick-tools { position: absolute; bottom: 7px; left: 0; right: 0; display: flex; justify-content: center; }
    .pick-tools button { width: 32px; height: 32px; }
    .strip { display: flex; background: linear-gradient(rgba(255, 228, 196, .8) 0 50%, rgba(255, 176, 60, .75) 52%, rgba(255, 222, 140, .8)); }
  `;

  private section(s: { from: Ring; to: Ring; face: boolean }) {
    const { from: a, to: b } = s;
    const outline = `M${b.cx} ${AXIS_Y - b.ry}L${a.cx} ${AXIS_Y - a.ry}A${a.rx} ${a.ry} 0 0 0 ${a.cx} ${AXIS_Y + a.ry}L${b.cx} ${AXIS_Y + b.ry}A${b.rx} ${b.ry} 0 0 0 ${b.cx} ${AXIS_Y - b.ry}Z`;
    return svg`
      <path d=${outline} fill="url(#steel)" stroke="#3c1a04"/>
      <ellipse cx=${b.cx} cy=${AXIS_Y} rx=${b.rx} ry=${b.ry} fill=${s.face ? "#7e3900" : "url(#steel)"} stroke=${s.face ? "#2c1000" : "none"}/>`;
  }

  private axisX(y: number) { return 1055 + (y - 162) * 0.0385; }

  render() {
    return html`
      <svg class="scene" viewBox="381 155 1206 820" preserveAspectRatio="xMidYMid slice" role="img" aria-label="Turned part model">
        <defs>
          <linearGradient id="steel" x1="0" y1="0" x2="0" y2="1">${STEEL_STOPS.map(([o, c]) => svg`<stop offset=${o} stop-color=${c}/>`)}</linearGradient>
          <linearGradient id="bore" x1="0" y1="0" x2="0" y2="1">
            <stop offset="0" stop-color="#8a4200"/><stop offset=".05" stop-color="#f47200"/><stop offset=".12" stop-color="#ff8a0c"/>
            <stop offset=".3" stop-color="#ffc02c"/><stop offset=".45" stop-color="#fff24a"/><stop offset=".58" stop-color="#fff44c"/>
            <stop offset=".75" stop-color="#ffca20"/><stop offset=".88" stop-color="#ff9000"/><stop offset=".95" stop-color="#e87000"/><stop offset="1" stop-color="#8a4200"/>
          </linearGradient>
        </defs>

        <g stroke="#2f2f78" fill="none">
          <path d="M381 709.500L657 707" stroke-dasharray="5 4"/>
          <path d="M1124 706L1587 704" stroke-dasharray="5 4"/>
          <path d="M1054.500 155L1067 462" stroke-dasharray="6 5"/>
          ${LEFT_TICKS.map((x) => svg`<path d="M${x}.5 702v14"/>`)}
          ${RIGHT_TICKS.map((x) => svg`<path d="M${x}.5 698v14"/>`)}
        </g>

        ${SECTIONS.map((s) => this.section(s))}
        <ellipse cx="1075" cy="706" rx="43" ry="218" fill="url(#bore)" stroke="#2c1000"/>
        <path d="M1044 548Q1058 610 1058.500 706T1046 866L1044 856Q1054 800 1054.500 706T1041 558Z" fill="#6e3200" stroke="#2c1000" stroke-width=".7"/>

        <g stroke="#3c1a04" fill="none">
          <path d="M833 416v17l14 1M914 450v-34M950 447v17M1067 462v29"/>
        </g>
        <g fill="none" stroke="#b53ab0">
          <path d="M697.500 368.500l.5 24 1 24h96" stroke-width="3"/>
          <path d="M795 416h117v31" stroke-width="2"/>
          <path d="M914 448h42" stroke-width="2" stroke-dasharray="3 2"/>
          <path d="M956 447.500h69l42 14" stroke-width="2"/>
          <path d="M1067 463h66" stroke-width="3"/>
        </g>

        <g stroke="#2f1a50" fill="none">
          <path d="M1067 462L1086.500 975" stroke-dasharray="6 4" stroke-width="1.200"/>
          <path d="M1033 706h91" stroke-dasharray="4 3"/>
          ${VERTICAL_TICKS.map((y) => svg`<path d="M${this.axisX(y) - 7} ${y}.5h14" stroke="#4a4080"/>`)}
        </g>
        <path d="M1074.500 706v-26" stroke="#28a028" stroke-width="3"/><path d="M1074.500 669l4.500 12h-9z" fill="#34c434" stroke="#1c841c"/>
        <path d="M1077 706h26" stroke="#e0501c" stroke-width="2.500"/><path d="M1111 706l-9-3.500v7z" fill="#e8501c"/>
        <path d="M1075 705l-5 5" stroke="#0c1c50" stroke-width="3"/><circle cx="1070" cy="710.500" r="4" fill="#0c1c50"/>

        <path d="M423 934v-17" stroke="#1e8a2c" stroke-width="2.500"/><path d="M422.500 908l3.500 9h-7z" fill="#3cae4a"/>
        <path d="M423 934.500h19" stroke="#6a1c1c" stroke-width="2"/><path d="M450 934.500l-8-3.500v7z" fill="#b02818"/>
        <path d="M423 935l-6 4" stroke="#101060" stroke-width="3"/>
        <g font-family="Roboto, sans-serif" font-size="12">
          <text x="415" y="910" fill="#222" font-size="10">Y</text><text x="450" y="938" fill="#5c1c2c">X</text>
          <text x="410" y="946" fill="#101060" font-weight="700">Z</text>
        </g>
      </svg>

      <div class="view-tools" role="toolbar" aria-label="View">
        ${VIEW_TOOLS.map(([name, size, drop]) => name === "|" ? html`<span class="rule"></span>`
          : html`<button class=${drop ? "drop" : ""} aria-label=${name.slice(1)}>${icon(name, size)}${drop ? html`<i class="caret"></i>` : nothing}</button>`)}
      </div>
      <div class="confirm">
        <button aria-label="OK">${icon("ok", 28)}</button><button aria-label="Cancel">${icon("cancel", 28)}</button>
      </div>
      <div class="pick-tools" role="toolbar" aria-label="Selection filter">
        <button aria-label="Accept">${icon("sOk", 24)}</button><button aria-label="Clear">${icon("sNo", 24)}</button>
        <div class="strip">${PICK_TOOLS.map((n) => html`<button aria-label=${n.slice(1)}>${icon(n, 24)}</button>`)}</div>
      </div>`;
  }
}

/* ---------- shell ---------- */

const TREE_TOOLS = ["tb1", "tb2", "tb3", "eye", "tb5", "sheet", "sheetDb"];
const LEFT_TABS = ["Data Entry", "CAD Tree", "CAM Tree", "BobArt", "Operations"];
const DOC_TABS = ["BobCAD1", "Prueba Torno V30.bbcd", "lathe-stock-trimming-OD-rough.bbcd", "2 Axis Lathe.SLDPRT"];
const RIGHT_TABS: [string, string][] = [["BobCAD Live", "w70"], ["Selection", "w56"], ["Measure Entity", "w79"], ["Layer", "w40"], ["Posting", "w43"], ["UCS", "w29"]];
const TOGGLES = ["stSnap", "stTool", "stBox", "stInfo", "stMagnet"];

@customElement("app-root")
export class AppRoot extends LitElement {
  static styles = css`
    :host { display: flex; flex-direction: column; min-height: 100vh; box-sizing: border-box; background: #fff; border-bottom: 1px solid #000; font: 12px/14px Roboto, "Liberation Sans", sans-serif; color: #222a3c; }
    button, input, select { font: inherit; color: inherit; margin: 0; }
    button { background: none; border: 0; padding: 0; }
    .window { flex: 1; display: flex; flex-direction: column; margin-bottom: 59px; background: #b9d3fc; border-bottom: 2px solid #1b2236; }
    .work { flex: 1; min-height: 0; display: grid; grid-template-columns: 366px minmax(0, 1fr) 318px; gap: 5px; padding: 5px 3px 6px 4px; border-top: 1px solid #95a3bd; background: linear-gradient(90deg, #c4d8fa, #b9d3fc 30%, #bdd6ff); }
    .dock { display: flex; flex-direction: column; min-height: 0; min-width: 0; }
    .panel { flex: 1; display: flex; flex-direction: column; min-height: 0; border: 1px solid #94abd2; background: #fff; }
    .title { display: flex; align-items: center; height: 20px; padding-left: 3px; border-bottom: 1px solid #a7b9db; background: linear-gradient(#bcd2fa, #e6effe); }
    .title.active { background: #f1f4fe; }
    .title h2 { flex: 1; margin: 0; font: inherit; }
    .title button { width: 20px; height: 16px; display: flex; align-items: center; justify-content: center; }
    .tree-tools { display: flex; gap: 3px; padding: 2px 2px 1px; background: linear-gradient(#fff, #fbfbff); }
    .tree-tools button { display: flex; align-items: center; justify-content: center; width: 21px; height: 22px; border: 1px solid #a8bfe6; background: linear-gradient(#eef4ff, #c7dafa); box-sizing: border-box; }
    .tabs { display: flex; align-items: flex-start; height: 23px; padding-left: 1px; }
    .tab { box-sizing: border-box; height: 21px; padding: 2px 5px 0; border: 1px solid #a3b6da; border-top: 0; margin-left: -1px; background: linear-gradient(#dbe6fd, #eef3ff); white-space: nowrap; overflow: hidden; text-align: left; }
    .tab.current { background: #fff; height: 23px; color: #444; }
    .clip { display: block; overflow: hidden; }
    .w70 { width: 71px; } .w56 { width: 57px; } .w79 { width: 80px; } .w40 { width: 41px; } .w43 { width: 44px; } .w29 { width: 30px; }
    .docs { display: flex; flex-direction: column; min-height: 0; min-width: 0; }
    .doc-tabs { display: flex; align-items: flex-end; height: 22px; }
    .doc-tab { height: 21px; padding: 0 5px; border: 1px solid #a3b6da; border-bottom: 0; margin-right: -1px; background: linear-gradient(#e3edff, #c9dcfc); }
    .doc-tab.current { height: 22px; background: linear-gradient(#fff, #f6f8ff); }
    .doc-tabs .gap { flex: 1; }
    .doc-tabs .x { width: 18px; height: 20px; }
    .frame { flex: 1; min-height: 0; display: flex; padding: 4px 5px 5px 4px; border: 1px solid #93aad4; background: #e9f0ff; }
    .frame bc-viewport { border: 1px solid #8d9bb8; border-top: 2px solid #7c869c; border-left-width: 1px; }
    .code { flex: 1; display: flex; min-height: 0; }
    .gutter { width: 14px; border-right: 1px dotted #b5b5b5; text-align: right; color: #8a8a8a; font-size: 11px; }
    .editor { flex: 1; border: 0; outline: 0; resize: none; padding: 0 4px; background: #fff; font: 12px/14px "Liberation Mono", monospace; }
    .status { display: flex; align-items: center; height: 28px; border-top: 2px solid #93aade; background: linear-gradient(#cfdff9, #e6edfd 35%, #dce7fa); color: #1c2740; }
    .status .hint { flex: 1; padding-left: 1px; }
    .coord { padding: 0 6px 0 7px; height: 24px; line-height: 24px; border-right: 1px solid #aebbd8; box-shadow: 1px 0 #fff; }
    .toggles { display: flex; gap: 6px; padding: 0 6px 0 7px; }
    .toggles button { display: flex; width: 22px; height: 22px; align-items: center; justify-content: center; box-sizing: border-box; border: 1px solid #d9a860; background: linear-gradient(#ffe3a8, #fcb64c 50%, #ffdf98); }
    .scale { width: 61px; height: 22px; box-sizing: border-box; border: 1px solid #a8b8d4; padding: 0 3px 4px; background: #fff; }
    .picker { display: flex; align-items: center; box-sizing: border-box; height: 22px; border: 1px solid #9fb2d8; background: linear-gradient(#e6efff, #cfdffb); margin-left: 5px; }
    .swatch { width: 28px; height: 20px; background: #0000fa; }
    .caret { width: 0; height: 0; border: 3px solid transparent; border-top: 3px solid #5a6c90; border-bottom: 0; margin: 0 4px; }
    .line { width: 50px; height: 2px; background: #0c2aa0; margin: 0 6px 0 3px; }
    .unit { position: relative; margin-right: -1px; }
    .unit select { appearance: none; border: 0; background: none; width: 42px; height: 20px; padding: 0 3px; }
    .unit .caret { position: absolute; right: 0; top: 9px; pointer-events: none; }
  `;

  @state() private leftTab = "CAM Tree";
  @state() private doc = DOC_TABS[1];
  @state() private rightTab = "Posting";

  private title(text: string, active: boolean) {
    return html`<header class=${classMap({ title: true, active })}><h2>${text}</h2>
      <button aria-label="Pin ${text}">${icon("pin", 14)}</button><button aria-label="Close ${text}">${icon("close", 16)}</button></header>`;
  }

  render() {
    return html`
      <div class="window">
        <bc-ribbon></bc-ribbon>
        <main class="work">
          <aside class="dock">
            <div class="panel">
              ${this.title("CAM Tree", false)}
              <div class="tree-tools" role="toolbar" aria-label="Tree tools">
                ${TREE_TOOLS.map((n, i) => html`<button aria-label="Tree tool ${i + 1}">${icon(n, 17)}</button>`)}
              </div>
              <bc-cam-tree></bc-cam-tree>
            </div>
            <nav class="tabs">
              ${LEFT_TABS.map((t) => html`<button class=${classMap({ tab: true, current: t === this.leftTab })} @click=${() => (this.leftTab = t)}>${t}</button>`)}
            </nav>
          </aside>

          <section class="docs">
            <nav class="doc-tabs">
              ${DOC_TABS.map((t) => html`<button class=${classMap({ "doc-tab": true, current: t === this.doc })} @click=${() => (this.doc = t)}>${t}</button>`)}
              <span class="gap"></span><button class="x" aria-label="Close document">${icon("close", 14)}</button>
            </nav>
            <div class="frame"><bc-viewport></bc-viewport></div>
          </section>

          <aside class="dock">
            <div class="panel">
              ${this.title("Posting", true)}
              <div class="code"><div class="gutter">1</div><textarea class="editor" aria-label="Posted code"></textarea></div>
            </div>
            <nav class="tabs">
              ${RIGHT_TABS.map(([t, w]) => html`<button class=${classMap({ tab: true, [w]: true, current: t === this.rightTab })} @click=${() => (this.rightTab = t)}><span class="clip">${t}</span></button>`)}
            </nav>
          </aside>
        </main>

        <footer class="status">
          <span class="hint">For Help, Press F1</span>
          <span class="coord">X=-93.4148</span><span class="coord">Y=51.5262</span><span class="coord">Z=5.0628</span>
          <span class="toggles">${TOGGLES.map((n) => html`<button aria-label=${n.slice(2)}>${icon(n, 18)}</button>`)}</span>
          <input class="scale" aria-label="Scale" value="1.0000" />
          <button class="picker" aria-label="Colour"><span class="swatch"></span><i class="caret"></i></button>
          <button class="picker" aria-label="Line style"><span class="line"></span><i class="caret"></i></button>
          <span class="picker unit"><select aria-label="Units"><option>mm</option><option>inch</option></select><i class="caret"></i></span>
        </footer>
      </div>`;
  }
}
